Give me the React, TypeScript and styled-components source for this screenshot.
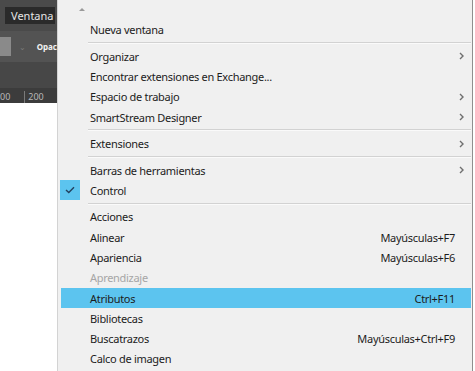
import React from "react";
import styled, { createGlobalStyle } from "styled-components";

const Global = createGlobalStyle`
  html, body { margin: 0; padding: 0; background: #ffffff; overflow: hidden; }
  body { font-family: "Noto Sans", "Open Sans", sans-serif; }
`;

const Page = styled.div`
  display: flex;
  width: 475px;
  height: 371px;
  background: #ffffff;
`;

const AppPanel = styled.div`
  flex: 0 0 57px;
  height: 103px;
  display: flex;
  flex-direction: column;
  overflow: hidden;
  font-family: "Noto Sans", sans-serif;
`;

const MenuBar = styled.div`
  height: 31px;
  background: #4a4a4a;
  display: flex;
  align-items: center;
  padding-left: 5px;
`;

const MenuBarItem = styled.div`
  background: #2a2a2a;
  color: #e6e6e6;
  font-size: 11px;
  height: 17px;
  line-height: 17px;
  padding: 0 6px 0 6px;
  width: 38px;
  white-space: nowrap;
`;

const ControlBar = styled.div`
  height: 31px;
  background: #535353;
  display: flex;
  align-items: center;
  gap: 8px;
`;

const Swatch = styled.div`
  width: 14px;
  height: 19px;
  background: #8a8a8a;
`;

const Caret = styled.div`
  width: 12px;
  color: #7a7a7a;
  font-size: 8px;
`;

const ControlLabel = styled.div`
  color: #f2f2f2;
  font-size: 8px;
  font-weight: 700;
  white-space: nowrap;
`;

const Spacer = styled.div`
  height: 26px;
  background: #474747;
`;

const Ruler = styled.div`
  height: 15px;
  background: #3c3c3c;
  display: flex;
  align-items: flex-end;
  gap: 14px;
  color: #b8b8b8;
  font-size: 9px;
  line-height: 12px;
  white-space: nowrap;
`;

const Tick = styled.span`
  display: inline-block;
  border-left: 1px solid #7a7a7a;
  padding-left: 3px;
  height: 12px;
`;

const Menu = styled.div`
  flex: 0 0 414px;
  height: 371px;
  background: #f0f0f0;
  border-left: 1px solid #d3d3d3;
  border-right: 1px solid #8f8f8f;
  display: flex;
  flex-direction: column;
  font-family: "Noto Sans", sans-serif;
  font-size: 11px;
  letter-spacing: -0.3px;
  color: #1c1c1c;
`;

const ScrollUp = styled.div`
  height: 19.6px;
  display: flex;
  align-items: center;
  padding-left: 21px;
  &::before {
    content: "";
    width: 0;
    height: 0;
    border-left: 3px solid transparent;
    border-right: 3px solid transparent;
    border-bottom: 3px solid #9a9a9a;
  }
`;

const Item = styled.div<{ $active?: boolean; $disabled?: boolean }>`
  display: flex;
  align-items: center;
  height: 20.3px;
  margin: 0 1px 0 3px;
  background: ${(p) => (p.$active ? "#5cc4ef" : "transparent")};
  color: ${(p) => (p.$disabled ? "#a6a6a6" : "#1c1c1c")};
  white-space: nowrap;
`;

const Gutter = styled.div`
  flex: 0 0 29px;
  height: 100%;
  display: flex;
  align-items: center;
`;

const CheckBox = styled.div`
  width: 20px;
  height: 20px;
  margin-left: -1px;
  background: #5cc4ef;
  display: flex;
  align-items: center;
  justify-content: center;
`;

const Label = styled.div`
  flex: 1;
`;

const Shortcut = styled.div`
  text-align: right;
`;

const Trailing = styled.div`
  flex: 0 0 16px;
  display: flex;
  align-items: center;
  padding-left: 4px;
  box-sizing: border-box;
`;

const Separator = styled.div`
  height: 6.2px;
  display: flex;
  align-items: center;
  padding-left: 30px;
  padding-right: 1px;
  &::after {
    content: "";
    flex: 1;
    height: 0;
    border-top: 1px solid #d2d2d2;
    border-bottom: 1px solid #fafafa;
  }
`;

const Chevron = () => (
  <svg width="5" height="8" viewBox="0 0 5 8">
    <polyline points="1,1 4,4 1,7" fill="none" stroke="#6f6f6f" strokeWidth="1.4" />
  </svg>
);

const Check = () => (
  <svg width="10" height="8" viewBox="0 0 10 8">
    <polyline points="1,4 3.8,6.6 9,1.2" fill="none" stroke="#22415f" strokeWidth="1.4" />
  </svg>
);

type Entry =
  | { sep: true }
  | { sep?: false; label: string; shortcut?: string; sub?: boolean; checked?: boolean; active?: boolean; disabled?: boolean };

const entries: Entry[] = [
  { label: "Nueva ventana" },
  { sep: true },
  { label: "Organizar", sub: true },
  { label: "Encontrar extensiones en Exchange..." },
  { label: "Espacio de trabajo", sub: true },
  { label: "SmartStream Designer", sub: true },
  { sep: true },
  { label: "Extensiones", sub: true },
  { sep: true },
  { label: "Barras de herramientas", sub: true },
  { label: "Control", checked: true },
  { sep: true },
  { label: "Acciones" },
  { label: "Alinear", shortcut: "Mayúsculas+F7" },
  { label: "Apariencia", shortcut: "Mayúsculas+F6" },
  { label: "Aprendizaje", disabled: true },
  { label: "Atributos", shortcut: "Ctrl+F11", active: true },
  { label: "Bibliotecas" },
  { label: "Buscatrazos", shortcut: "Mayúsculas+Ctrl+F9" },
  { label: "Calco de imagen" },
];

export default function App() {
  return (
    <>
      <Global />
      <Page>
        <AppPanel>
          <MenuBar>
            <MenuBarItem>Ventana</MenuBarItem>
          </MenuBar>
          <ControlBar>
            <Swatch />
            <Caret>⌄</Caret>
            <ControlLabel>Opac</ControlLabel>
          </ControlBar>
          <Spacer />
          <Ruler>
            <span>00</span>
            <Tick>200</Tick>
          </Ruler>
        </AppPanel>
        <Menu>
          <ScrollUp />
          {entries.map((e, i) =>
            e.sep ? (
              <Separator key={i} />
            ) : (
              <Item key={i} $active={e.active} $disabled={e.disabled}>
                <Gutter>
                  {e.checked && (
                    <CheckBox>
                      <Check />
                    </CheckBox>
                  )}
                </Gutter>
                <Label>{e.label}</Label>
                {e.shortcut && <Shortcut>{e.shortcut}</Shortcut>}
                <Trailing>{e.sub && <Chevron />}</Trailing>
              </Item>
            )
          )}
        </Menu>
      </Page>
    </>
  );
}
